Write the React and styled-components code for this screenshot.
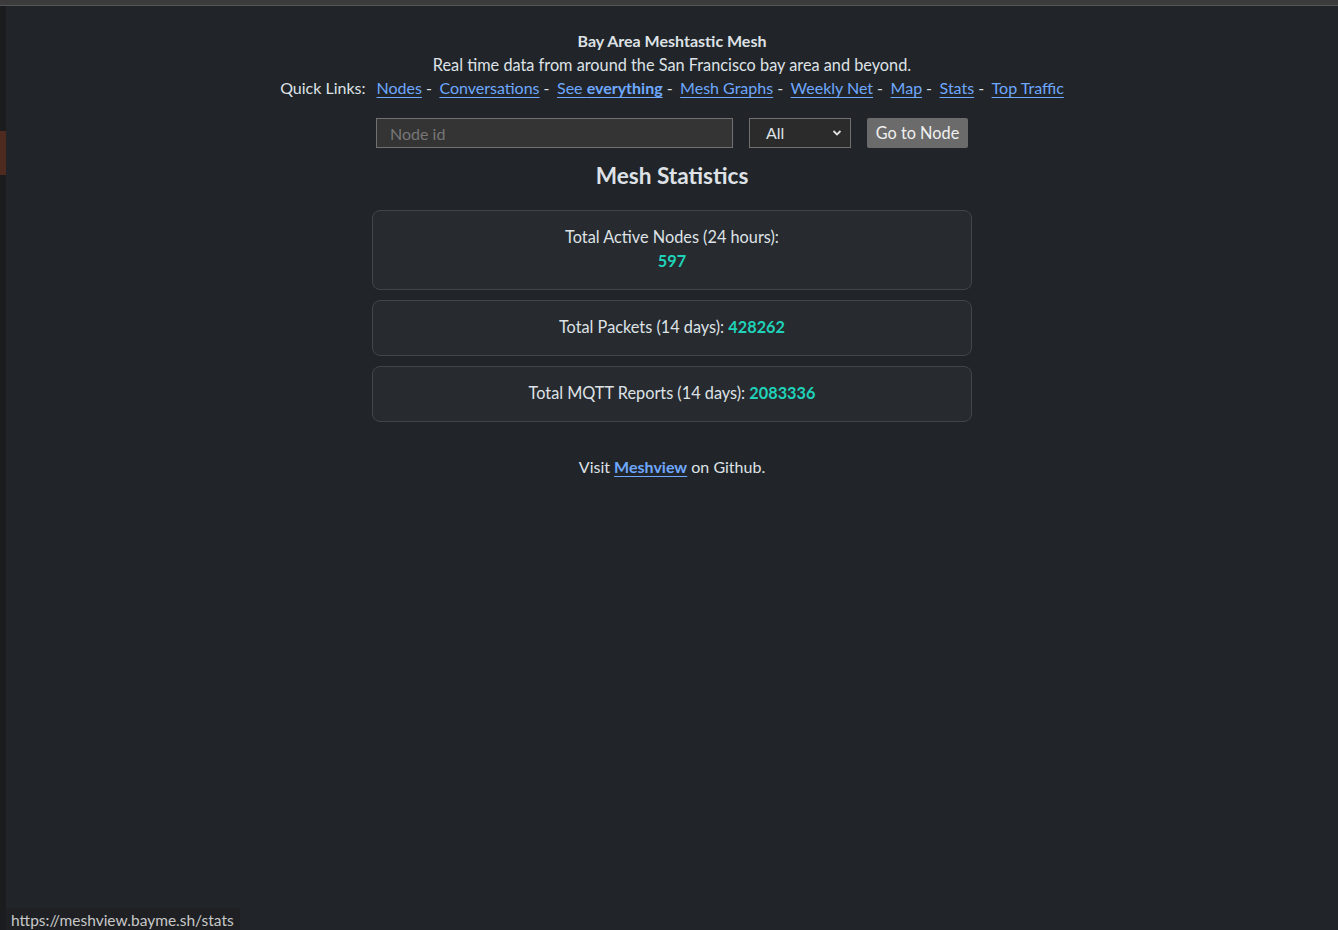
import React from 'react';
import styled, { createGlobalStyle } from 'styled-components';

const GlobalStyle = createGlobalStyle`
  html, body {
    margin: 0;
    padding: 0;
    background: #1b1d20;
  }
  body {
    font-family: Lato, "Noto Sans", sans-serif;
    font-size: 16px;
    color: #dee2e6;
  }
`;

const Frame = styled.div`
  display: grid;
  grid-template-columns: 6px 1fr;
  grid-template-rows: 6px 1fr;
  width: 1338px;
  height: 930px;
  overflow: hidden;
  position: relative;
`;

const TopStrip = styled.div`
  grid-column: 1 / 3;
  background: #3c3c3c;
  border-bottom: 1px solid #555;
`;

const SideStrip = styled.div`
  background: #1b1c1e;
  display: flex;
  flex-direction: column;
  padding-top: 125px;
`;

const SideMark = styled.div`
  height: 44px;
  background: #4e2a1f;
`;

const Page = styled.main`
  background: #212529;
  display: flex;
  flex-direction: column;
  align-items: center;
  padding-top: 23px;
  line-height: 24px;
`;

const Title = styled.div`
  font-weight: 700;
`;

const Subtitle = styled.div`
  font-size: 16.3px;
`;

const QuickLinks = styled.div`
  display: flex;
  align-items: baseline;
  gap: 4px;
  margin-top: -1px;
`;

const Label = styled.span`
  margin-right: 7px;
`;

const Link = styled.a`
  color: #6ea8fe;
  text-decoration: underline;
  text-underline-offset: 3px;
  cursor: pointer;
`;

const Sep = styled.span`
  margin-right: 3.5px;
`;

const SearchRow = styled.form`
  display: flex;
  gap: 16px;
  margin-top: 18px;
`;

const Input = styled.input`
  width: 357px;
  height: 30px;
  box-sizing: border-box;
  background: #343434;
  border: 1px solid #707070;
  color: #dee2e6;
  font: inherit;
  padding: 0 13px;
  &::placeholder {
    color: #777;
  }
`;

const Select = styled.div`
  width: 102px;
  height: 30px;
  box-sizing: border-box;
  background: #2b2b2b;
  border: 1px solid #707070;
  display: flex;
  align-items: center;
  justify-content: space-between;
  padding: 0 8px 0 16px;
`;

const GoButton = styled.button`
  height: 30px;
  width: 101px;
  background: #6b6b6b;
  border: none;
  border-radius: 2px;
  color: #f0f0f0;
  font: inherit;
  font-size: 16.3px;
  padding: 0;
`;

const Heading = styled.h2`
  font-size: 22.6px;
  font-weight: 700;
  margin: 14px 0 20px;
  line-height: 28px;
`;

const Cards = styled.div`
  display: flex;
  flex-direction: column;
  gap: 10px;
  width: 600px;
`;

const Card = styled.div`
  box-sizing: border-box;
  background: #272a2f;
  border: 1px solid #41454b;
  border-radius: 8px;
  padding: 14px 16px 16px;
  text-align: center;
  font-size: 16.3px;
`;

const Value = styled.span`
  color: #1fd2b9;
  font-weight: 700;
`;

const Footer = styled.p`
  margin: 33px 0 0;
`;

const StrongLink = styled(Link)`
  font-weight: 700;
`;

const StatusBar = styled.div`
  position: absolute;
  left: 6px;
  bottom: 0;
  height: 22px;
  padding: 0 6px 0 5px;
  background: #1e2023;
  border-top-right-radius: 4px;
  color: #c8c8c8;
  font-size: 15.5px;
  line-height: 24px;
`;

function Chevron() {
  return (
    <svg width="10" height="8" viewBox="0 0 10 8">
      <path d="M1.5 2 L5 5.5 L8.5 2" fill="none" stroke="#e0e0e0" strokeWidth="1.8" />
    </svg>
  );
}

const links = ['Nodes', 'Conversations', 'See everything', 'Mesh Graphs', 'Weekly Net', 'Map', 'Stats', 'Top Traffic'];

export default function App() {
  return (
    <>
      <GlobalStyle />
      <Frame>
        <TopStrip />
        <SideStrip>
          <SideMark />
        </SideStrip>
        <Page>
          <Title>Bay Area Meshtastic Mesh</Title>
          <Subtitle>Real time data from around the San Francisco bay area and beyond.</Subtitle>
          <QuickLinks>
            <Label>Quick Links:</Label>
            {links.map((l, i) => (
              <React.Fragment key={l}>
                <Link>
                  {l === 'See everything' ? (
                    <>
                      See <b>everything</b>
                    </>
                  ) : (
                    l
                  )}
                </Link>
                {i < links.length - 1 && <Sep>-</Sep>}
              </React.Fragment>
            ))}
          </QuickLinks>
          <SearchRow onSubmit={(e) => e.preventDefault()}>
            <Input placeholder="Node id" />
            <Select>
              <span>All</span>
              <Chevron />
            </Select>
            <GoButton type="submit">Go to Node</GoButton>
          </SearchRow>
          <Heading>Mesh Statistics</Heading>
          <Cards>
            <Card>
              Total Active Nodes (24 hours):
              <br />
              <Value>597</Value>
            </Card>
            <Card>
              Total Packets (14 days): <Value>428262</Value>
            </Card>
            <Card>
              Total MQTT Reports (14 days): <Value>2083336</Value>
            </Card>
          </Cards>
          <Footer>
            Visit <StrongLink>Meshview</StrongLink> on Github.
          </Footer>
        </Page>
        <StatusBar>https://meshview.bayme.sh/stats</StatusBar>
      </Frame>
    </>
  );
}
